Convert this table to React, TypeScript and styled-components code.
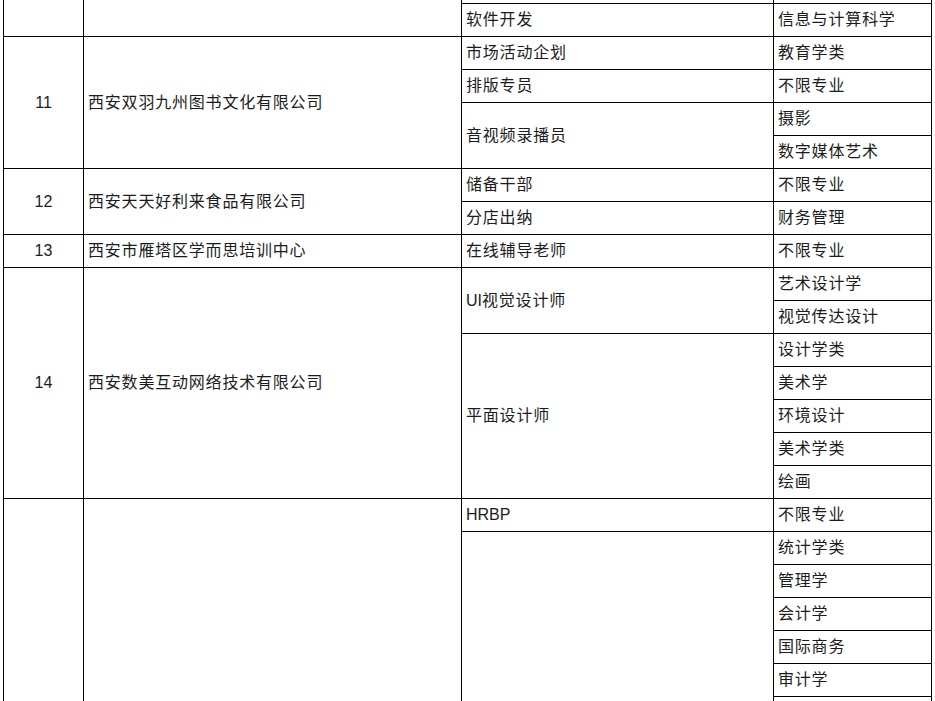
import React from "react";
import styled, { createGlobalStyle } from "styled-components";

const Global = createGlobalStyle`
  html, body { margin: 0; padding: 0; background: #ffffff; }
  body { width: 935px; height: 701px; overflow: hidden; }
`;

const Sheet = styled.div`
  display: grid;
  grid-template-columns: 80px 378px 312px 158px;
  grid-template-rows: 4px repeat(22, 33px);
  margin-left: 3px;
  border-left: 1px solid #000;
  width: max-content;
  font-family: "Liberation Sans", "Noto Sans CJK SC", sans-serif;
  color: #1c1c1c;
`;

const Cell = styled.div<{ $row: number; $span: number; $col: number; $center?: boolean; $top?: boolean }>`
  grid-column: ${(p) => p.$col};
  grid-row: ${(p) => p.$row} / span ${(p) => p.$span};
  box-sizing: border-box;
  border-right: 1px solid #000;
  border-bottom: 1px solid #000;
  display: flex;
  align-items: center;
  justify-content: ${(p) => (p.$center ? "center" : "flex-start")};
  padding: ${(p) => (p.$center ? "0" : "0 0 0 4px")};
  font-size: 16px;
  letter-spacing: ${(p) => (p.$center ? "0" : "0.8px")};
  white-space: nowrap;
  overflow: hidden;
  line-height: 1;
`;

const Num = styled.span`
  font-family: "Liberation Sans", Arial, sans-serif;
  font-size: 16px;
  letter-spacing: 0;
`;

const Latin = styled.span`
  font-family: "Liberation Sans", Arial, sans-serif;
  letter-spacing: 0;
`;

type Span = { row: number; span: number; text?: React.ReactNode };
type Group = { no?: string; company?: string; row: number; span: number; jobs: Span[]; majors: Span[] };

const groups: Group[] = [
  {
    row: 1,
    span: 2,
    jobs: [
      { row: 1, span: 1 },
      { row: 2, span: 1, text: "软件开发" },
    ],
    majors: [
      { row: 1, span: 1 },
      { row: 2, span: 1, text: "信息与计算科学" },
    ],
  },
  {
    no: "11",
    company: "西安双羽九州图书文化有限公司",
    row: 3,
    span: 4,
    jobs: [
      { row: 3, span: 1, text: "市场活动企划" },
      { row: 4, span: 1, text: "排版专员" },
      { row: 5, span: 2, text: "音视频录播员" },
    ],
    majors: [
      { row: 3, span: 1, text: "教育学类" },
      { row: 4, span: 1, text: "不限专业" },
      { row: 5, span: 1, text: "摄影" },
      { row: 6, span: 1, text: "数字媒体艺术" },
    ],
  },
  {
    no: "12",
    company: "西安天天好利来食品有限公司",
    row: 7,
    span: 2,
    jobs: [
      { row: 7, span: 1, text: "储备干部" },
      { row: 8, span: 1, text: "分店出纳" },
    ],
    majors: [
      { row: 7, span: 1, text: "不限专业" },
      { row: 8, span: 1, text: "财务管理" },
    ],
  },
  {
    no: "13",
    company: "西安市雁塔区学而思培训中心",
    row: 9,
    span: 1,
    jobs: [{ row: 9, span: 1, text: "在线辅导老师" }],
    majors: [{ row: 9, span: 1, text: "不限专业" }],
  },
  {
    no: "14",
    company: "西安数美互动网络技术有限公司",
    row: 10,
    span: 7,
    jobs: [
      {
        row: 10,
        span: 2,
        text: (
          <>
            <Latin>UI</Latin>视觉设计师
          </>
        ),
      },
      { row: 12, span: 5, text: "平面设计师" },
    ],
    majors: [
      { row: 10, span: 1, text: "艺术设计学" },
      { row: 11, span: 1, text: "视觉传达设计" },
      { row: 12, span: 1, text: "设计学类" },
      { row: 13, span: 1, text: "美术学" },
      { row: 14, span: 1, text: "环境设计" },
      { row: 15, span: 1, text: "美术学类" },
      { row: 16, span: 1, text: "绘画" },
    ],
  },
  {
    row: 17,
    span: 7,
    jobs: [
      { row: 17, span: 1, text: <Latin>HRBP</Latin> },
      { row: 18, span: 6 },
    ],
    majors: [
      { row: 17, span: 1, text: "不限专业" },
      { row: 18, span: 1, text: "统计学类" },
      { row: 19, span: 1, text: "管理学" },
      { row: 20, span: 1, text: "会计学" },
      { row: 21, span: 1, text: "国际商务" },
      { row: 22, span: 1, text: "审计学" },
      { row: 23, span: 1 },
    ],
  },
];

export default function App() {
  return (
    <>
      <Global />
      <Sheet>
        {groups.map((g, gi) => (
          <React.Fragment key={gi}>
            <Cell $col={1} $row={g.row} $span={g.span} $center>
              {g.no && <Num>{g.no}</Num>}
            </Cell>
            <Cell $col={2} $row={g.row} $span={g.span}>
              {g.company}
            </Cell>
            {g.jobs.map((j, ji) => (
              <Cell key={"j" + ji} $col={3} $row={j.row} $span={j.span}>
                {j.text}
              </Cell>
            ))}
            {g.majors.map((m, mi) => (
              <Cell key={"m" + mi} $col={4} $row={m.row} $span={m.span}>
                {m.text}
              </Cell>
            ))}
          </React.Fragment>
        ))}
      </Sheet>
    </>
  );
}
